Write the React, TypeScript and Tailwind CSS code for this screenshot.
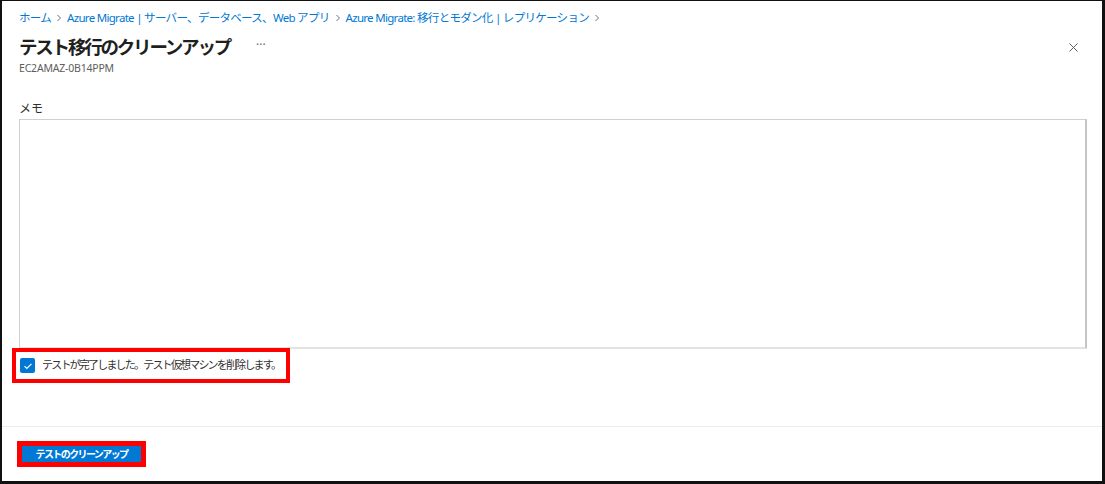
import { X } from 'lucide-react'

const font = { fontFamily: '"Noto Sans", "Noto Sans CJK JP", sans-serif' }

function Chevron() {
  return (
    <svg className="w-[8px] h-[8px] text-gray-500 mx-[4px]" viewBox="0 0 8 8" fill="none" stroke="currentColor" strokeWidth="1">
      <path d="M2.5 1l3 3-3 3" />
    </svg>
  )
}

export default function App() {
  return (
    <div
      className="w-[1105px] h-[484px] bg-white border-l-2 border-t border-r-[3px] border-b-[3px] border-[#111] flex flex-col overflow-hidden text-[#323130]"
      style={font}
    >
      {/* Header */}
      <div className="px-[17px] pt-[8px]">
        <div className="flex items-center text-[11.5px] text-[#0078d4] h-[18px] tracking-[-0.7px]">
          <span>ホーム</span>
          <Chevron />
          <span>Azure Migrate | サーバー、データベース、Web アプリ</span>
          <Chevron />
          <span>Azure Migrate: 移行とモダン化 | レプリケーション</span>
          <Chevron />
        </div>
        <div className="flex items-center justify-between mt-[8px] h-[24px]">
          <div className="flex items-center">
            <h1 className="text-[18.5px] font-bold leading-none tracking-[-2.2px] text-[#201f1e]">テスト移行のクリーンアップ</h1>
            <span className="ml-[26px] text-[12px] text-gray-500 leading-none -mt-[4px]">···</span>
          </div>
          <X className="w-[15px] h-[15px] text-gray-600 mr-[4px]" strokeWidth={1.5} />
        </div>
        <div className="text-[10.5px] text-[#605e5c] mt-[2px] leading-[14px] tracking-[-0.2px]">EC2AMAZ-0B14PPM</div>
      </div>

      {/* Body */}
      <div className="px-[17px] pt-[26px] flex-1 flex flex-col">
        <label className="text-[12px] leading-[16px] text-[#323130]">メモ</label>
        <div className="mt-[2px] h-[230px] w-[1068px] border border-[#d0d0d0] border-r-[#c4c4c4] border-r-2 border-b-[#e2e2e2] border-b-2"></div>
        <div className="-ml-[7px] -mt-[1px] w-[278px] h-[35px] border-4 border-[#ff0000] flex items-center pl-[4px]">
          <div className="w-[15px] h-[15px] rounded-[2px] bg-[#0078d4] flex items-center justify-center shrink-0">
            <svg className="w-[10px] h-[10px]" viewBox="0 0 10 10" fill="none" stroke="white" strokeWidth="1.2">
              <path d="M1.5 5.2l2.3 2.3L8.5 2.8" />
            </svg>
          </div>
          <span className="ml-[7px] text-[11px] text-[#323130] tracking-[-1.8px] whitespace-nowrap">テストが完了しました。テスト仮想マシンを削除します。</span>
        </div>
      </div>

      {/* Footer */}
      <div className="border-t border-[#ececec] h-[55px] px-[15px] pt-[14px]">
        <div className="w-[129px] h-[26px] border-[5px] border-[#ff0000] bg-[#0078d4] flex items-center justify-center">
          <span className="text-[10px] font-bold text-white tracking-[-1.6px] leading-none whitespace-nowrap">テストのクリーンアップ</span>
        </div>
      </div>
    </div>
  )
}
